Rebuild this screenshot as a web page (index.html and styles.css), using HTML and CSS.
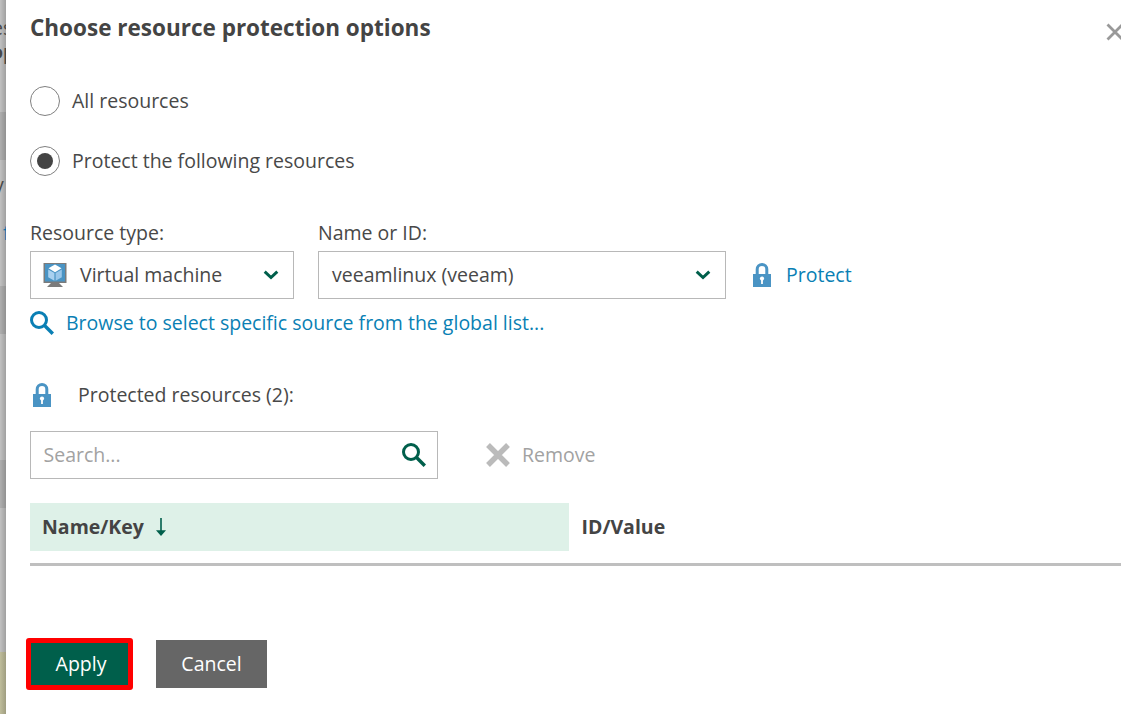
FILE: index.html
```html
<!DOCTYPE html>
<html lang="en">
<head>
<meta charset="utf-8">
<title>Choose resource protection options</title>
<link rel="stylesheet" href="styles.css">
</head>
<body>
<div class="screen">
  <aside class="backdrop">
    <div class="band band-top"><span class="peek peek-es">es</span><span class="peek peek-op">op</span></div>
    <div class="band band-row"></div>
    <div class="band band-mid"><span class="peek peek-y">y</span><span class="peek peek-f">f</span></div>
    <div class="band band-row"></div>
    <div class="band band-mid"></div>
    <div class="band band-row"></div>
    <div class="band band-low"></div>
    <div class="band band-note"></div>
  </aside>
  <main class="dialog">
    <header class="header">
      <h1 class="title">Choose resource protection options</h1>
      <svg class="close" width="18" height="18" viewBox="0 0 18 18"><path d="M1.5 1.5L16.5 16.5M16.5 1.5L1.5 16.5" stroke="#999" stroke-width="2.8" fill="none"/></svg>
    </header>
    <div class="option"><span class="radio"></span><span>All resources</span></div>
    <div class="option"><span class="radio radio-on"></span><span>Protect the following resources</span></div>
    <div class="fields">
      <div class="field type-field">
        <label class="label">Resource type:</label>
        <div class="select">
          <svg class="vm" width="24" height="24" viewBox="0 0 24 24">
            <path d="M0.5 0H23.5V20H0.5Z" fill="#7b7b7b"/><path d="M2 1H22V18.5H2Z" fill="#4a94c4"/>
            <path d="M8 20H16L20 24H4Z" fill="#7b7b7b"/>
            <path d="M12 1.5L18.5 5.3L12 9.2L5.5 5.3Z" fill="#fff"/>
            <path d="M5.2 6.6L11.4 10V17.7L5.2 14.3Z" fill="#a9d1f0"/><path d="M18.8 6.6L12.6 10V17.7L18.8 14.3Z" fill="#9ac7ea"/>
          </svg>
          <span class="value">Virtual machine</span>
          <svg class="chevron" width="16" height="10" viewBox="0 0 16 10"><path d="M1.7 1.7L8 7.5L14.3 1.7" fill="none" stroke="#005f4b" stroke-width="3"/></svg>
        </div>
      </div>
      <div class="field name-field">
        <label class="label">Name or ID:</label>
        <div class="select">
          <span class="value">veeamlinux (veeam)</span>
          <svg class="chevron" width="16" height="10" viewBox="0 0 16 10"><path d="M1.7 1.7L8 7.5L14.3 1.7" fill="none" stroke="#005f4b" stroke-width="3"/></svg>
        </div>
      </div>
      <a class="protect">
        <svg width="18" height="24" viewBox="0 0 18 24"><path d="M4.2 11V6.3A4.8 4.8 0 0 1 13.8 6.3V11" fill="none" stroke="#4a94c4" stroke-width="3"/><path d="M0 11H18V24H0Z" fill="#4a94c4"/><circle cx="9" cy="15.6" r="2.1" fill="#fff"/><path d="M8.1 16H9.9V21H8.1Z" fill="#fff"/></svg>
        <span>Protect</span>
      </a>
    </div>
    <a class="browse">
      <svg width="24" height="24" viewBox="0 0 24 24"><circle cx="9" cy="9" r="7.5" fill="none" stroke="#0a7fb4" stroke-width="3"/><path d="M14.3 14.3L22.8 22.8" stroke="#0a7fb4" stroke-width="3.4"/></svg>
      <span>Browse to select specific source from the global list...</span>
    </a>
    <div class="protected">
      <svg width="18" height="24" viewBox="0 0 18 24"><path d="M4.2 11V6.3A4.8 4.8 0 0 1 13.8 6.3V11" fill="none" stroke="#4a94c4" stroke-width="3"/><path d="M0 11H18V24H0Z" fill="#4a94c4"/><circle cx="9" cy="15.6" r="2.1" fill="#fff"/><path d="M8.1 16H9.9V21H8.1Z" fill="#fff"/></svg>
      <span>Protected resources (2):</span>
    </div>
    <div class="toolbar">
      <div class="search">
        <span>Search...</span>
        <svg width="24" height="24" viewBox="0 0 24 24"><circle cx="9" cy="9" r="7.5" fill="none" stroke="#005f4b" stroke-width="3"/><path d="M14.3 14.3L22.8 22.8" stroke="#005f4b" stroke-width="3.4"/></svg>
      </div>
      <div class="remove">
        <svg width="24" height="24" viewBox="0 0 24 24"><path d="M2 2L22 22M22 2L2 22" stroke="#bbb" stroke-width="5.4"/></svg>
        <span>Remove</span>
      </div>
    </div>
    <div class="table-head">
      <div class="col col-name"><span>Name/Key</span>
        <svg width="10" height="18" viewBox="0 0 10 18"><path d="M5 0V14" stroke="#005f4b" stroke-width="1.6"/><path d="M0 12.3H10L5 18Z" fill="#005f4b"/></svg>
      </div>
      <div class="col col-id"><span>ID/Value</span></div>
    </div>
    <div class="rule"></div>
    <footer class="footer">
      <button class="btn apply">Apply</button>
      <button class="btn cancel">Cancel</button>
    </footer>
  </main>
</div>
</body>
</html>
```
FILE: styles.css
```css
* { box-sizing: border-box; }
body { margin: 0; overflow: hidden; font-family: "Open Sans", sans-serif; font-size: 19.5px; line-height: 24px; color: #484848; white-space: nowrap; }
svg { display: block; flex: none; }
.screen { display: flex; width: 1121px; height: 714px; overflow: hidden; }
.backdrop { width: 6px; flex: none; overflow: hidden; background: linear-gradient(90deg, #c1c1c1, #a0a0a0); }
.band { overflow: hidden; }
.band-top { height: 112px; padding-top: 16px; }
.band-row { height: 48px; background: rgba(0, 0, 0, .09); }
.band-mid { height: 126px; }
.band-low { height: 144px; }
.band-note { height: 62px; background: linear-gradient(90deg, #bfbd9b, #9f9d80); }
.peek { display: block; }
.peek-es { margin-left: -8px; }
.peek-op { margin-left: -9px; font-weight: 700; }
.peek-y { margin: 13px 0 0 -6px; }
.peek-f { margin: 24px 0 0 3px; color: #006fa8; }
.dialog { flex: 1; min-width: 0; height: 714px; padding-left: 24px; background: #fff; overflow: hidden; display: flex; flex-direction: column; }
.header { display: flex; justify-content: space-between; align-items: flex-start; height: 86px; padding-top: 12px; flex: none; }
.title { margin: 0; font-size: 22.5px; line-height: 32px; font-weight: 700; color: #444; }
.close { margin: 11px -3px 0 0; }
.option { display: flex; align-items: center; gap: 12px; height: 30px; margin-bottom: 30px; flex: none; }
.radio { width: 30px; height: 30px; border: 1.5px solid #808080; border-radius: 50%; display: grid; place-items: center; }
.radio-on::after { content: ""; width: 16px; height: 16px; border-radius: 50%; background: #444; }
.fields { display: flex; align-items: flex-end; margin-top: 15px; height: 78px; flex: none; }
.field { display: flex; flex-direction: column; }
.type-field { width: 264px; margin-right: 24px; }
.name-field { width: 408px; margin-right: 27px; }
.label { height: 30px; }
.select { display: flex; align-items: center; height: 48px; border: 1px solid #b8b8b8; padding: 0 14.5px 0 13px; }
.vm { margin: 0 13px 0 -1px; }
.value { flex: 1; }
.protect { display: flex; align-items: center; gap: 15px; height: 48px; color: #0a7fb4; }
.browse { display: flex; align-items: center; gap: 12px; height: 24px; margin-top: 12px; color: #0a7fb4; flex: none; }
.protected { display: flex; align-items: center; gap: 27px; height: 24px; margin-top: 48px; padding-left: 3px; flex: none; }
.toolbar { display: flex; height: 48px; margin-top: 24px; flex: none; }
.search { width: 408px; border: 1px solid #b8b8b8; padding: 0 11px 0 12.5px; display: flex; justify-content: space-between; align-items: center; color: #a2a2a2; }
.remove { display: flex; align-items: center; gap: 12px; margin-left: 48px; color: #a2a2a2; }
.table-head { display: flex; height: 48px; margin-top: 24px; font-weight: 700; color: #444; flex: none; }
.col { display: flex; align-items: center; padding-left: 12px; }
.col-name { width: 539px; background: #def1e8; gap: 12px; }
.col-id { padding-left: 12.5px; }
.rule { height: 3px; margin-top: 12px; background: #bfbfbf; flex: none; }
.footer { display: flex; margin: 72px 0 0 -4px; align-items: center; height: 52px; flex: none; }
.btn { font: inherit; color: #fff; border: 0; padding: 0; border-radius: 0; }
.apply { width: 107px; height: 52px; padding-left: 3px; background: #005f4b; border: 5px solid #f00; border-radius: 3px; margin-right: 23px; }
.cancel { width: 111px; height: 48px; background: #666; }
```
